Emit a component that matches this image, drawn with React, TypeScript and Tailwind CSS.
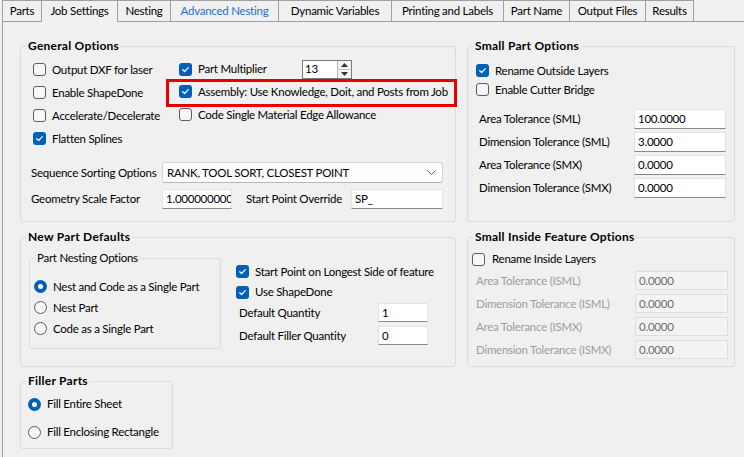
import React from "react";

const Check = ({ checked }: { checked?: boolean }) =>
  checked ? (
    <span className="w-[13px] h-[13px] rounded-[3px] bg-[#005fb8] flex items-center justify-center shrink-0">
      <svg width="9" height="9" viewBox="0 0 9 9">
        <path d="M1.7 4.7 3.6 6.5 7.3 2.6" fill="none" stroke="#fff" strokeWidth="1.2" strokeLinecap="round" strokeLinejoin="round" />
      </svg>
    </span>
  ) : (
    <span className="w-[13px] h-[13px] rounded-[3px] border border-[#5c5c5c] bg-[#f7f7f7] shrink-0" />
  );

const Radio = ({ checked }: { checked?: boolean }) =>
  checked ? (
    <span className="w-[13px] h-[13px] rounded-full bg-[#005fb8] flex items-center justify-center shrink-0">
      <span className="w-[5px] h-[5px] rounded-full bg-white" />
    </span>
  ) : (
    <span className="w-[13px] h-[13px] rounded-full border border-[#5c5c5c] bg-[#f7f7f7] shrink-0" />
  );

const Group = ({
  title,
  className,
  bold = true,
  children,
}: {
  title: string;
  className: string;
  bold?: boolean;
  children?: React.ReactNode;
}) => (
  <div className={`border border-[#dcdcdc] rounded-[3px] flex flex-col shrink-0 ${className}`}>
    <div
      className={`-mt-[9px] ml-[5px] px-[2px] w-fit bg-[#f0f0f0] leading-[16px] whitespace-nowrap ${
        bold ? "font-bold text-[12px] tracking-[0.25px]" : ""
      }`}
    >
      {title}
    </div>
    {children}
  </div>
);

const Field = ({ value, className }: { value: string; className: string }) => (
  <div className={`bg-white border border-[#e3e3e3] border-b-[#8a8a8a] pl-[3px] flex items-center overflow-hidden whitespace-nowrap shrink-0 ${className}`}>
    {value}
  </div>
);

const Disabled = ({ value }: { value: string }) => (
  <div className="w-[93px] h-[19px] bg-[#f3f3f3] border border-[#dedede] pl-[3px] flex items-center text-[#6d6d6d] shrink-0">
    {value}
  </div>
);

const Spinner = () => (
  <div className="flex h-[19px] border border-[#7a7a7a] bg-white w-[50px] shrink-0">
    <div className="flex-1 pl-[2px] flex items-center">13</div>
    <div className="w-[14px] flex flex-col border-l border-[#b5b5b5]">
      <div className="flex-1 flex items-center justify-center bg-[#f4f4f4] border-b border-[#c8c8c8]">
        <svg width="7" height="4" viewBox="0 0 7 4"><path d="M0 4 3.5 0 7 4Z" fill="#333" /></svg>
      </div>
      <div className="flex-1 flex items-center justify-center bg-[#f4f4f4]">
        <svg width="7" height="4" viewBox="0 0 7 4"><path d="M0 0 3.5 4 7 0Z" fill="#333" /></svg>
      </div>
    </div>
  </div>
);

const tabs: { label: string; w: string; selected?: boolean; hover?: boolean; last?: boolean }[] = [
  { label: "Parts", w: "w-[39px]" },
  { label: "Job Settings", w: "w-[76px]", selected: true },
  { label: "Nesting", w: "w-[53px]" },
  { label: "Advanced Nesting", w: "w-[108px]", hover: true },
  { label: "Dynamic Variables", w: "w-[113px]" },
  { label: "Printing and Labels", w: "w-[112px]" },
  { label: "Part Name", w: "w-[66px]" },
  { label: "Output Files", w: "w-[76px]" },
  { label: "Results", w: "w-[49px]", last: true },
];

export default function App() {
  return (
    <div className="w-[744px] h-[457px] overflow-hidden bg-[#f0f0f0] text-[11.5px] tracking-[-0.25px] leading-[16px] text-black font-['Lato',sans-serif]">
      {/* Tab strip */}
      <div className="h-[21px] pl-[2px] flex items-start">
        {tabs.map((t) => (
          <div
            key={t.label}
            className={`${t.w} ${t.selected ? "h-[22px] relative z-10" : "h-[21px]"} ${t.last ? "border-r" : ""} ${t.hover ? "text-[#1f6fcf]" : ""} border-l border-t border-[#a0a0a0] bg-[#f0f0f0] flex items-center justify-center whitespace-nowrap shrink-0 pb-[1px]`}
          >
            {t.label}
          </div>
        ))}
      </div>

      {/* Tab page */}
      <div className="ml-[2px] h-[436px] border-l border-t border-[#a0a0a0] flex">
        {/* Left column */}
        <div className="ml-[17px] w-[436px] flex flex-col shrink-0">
          <Group title="General Options" className="mt-[24px] h-[176px]">
            <div className="mt-[4px] flex">
              <div className="w-[158px] flex flex-col">
                {([
                  ["Output DXF for laser", false],
                  ["Enable ShapeDone", false],
                  ["Accelerate/Decelerate", false],
                  ["Flatten Splines", true],
                ] as [string, boolean][]).map(([t, c]) => (
                  <div key={t} className="h-[23px] pl-[12px] flex items-center gap-[6px] whitespace-nowrap">
                    <Check checked={c} />
                    {t}
                  </div>
                ))}
              </div>
              <div className="flex flex-col">
                <div className="h-[22px] flex items-center">
                  <div className="w-[123px] flex items-center gap-[6px] whitespace-nowrap">
                    <Check checked />
                    Part Multiplier
                  </div>
                  <Spinner />
                </div>
                <div className="relative h-[23px] flex items-center gap-[6px] whitespace-nowrap">
                  <Check checked />
                  Assembly: Use Knowledge, Doit, and Posts from Job
                  <div className="absolute left-[-13px] top-[-1px] w-[291px] h-[28px] border-[3px] border-[#e60000]" />
                </div>
                <div className="h-[23px] flex items-center gap-[6px] whitespace-nowrap">
                  <Check />
                  Code Single Material Edge Allowance
                </div>
              </div>
            </div>
            <div className="mt-[12px] h-[21px] pl-[10px] flex items-center">
              <div className="w-[131px] whitespace-nowrap">Sequence Sorting Options</div>
              <div className="w-[281px] h-[21px] bg-[#fdfdfd] border border-[#d4d4d4] border-b-[#b8b8b8] rounded-[3px] pl-[4px] pr-[6px] flex items-center justify-between">
                <span>RANK, TOOL SORT, CLOSEST POINT</span>
                <svg width="9" height="5" viewBox="0 0 9 5">
                  <path d="M0.5 0.5 4.5 4.5 8.5 0.5" fill="none" stroke="#606060" strokeWidth="1" />
                </svg>
              </div>
            </div>
            <div className="mt-[6px] h-[20px] pl-[10px] flex items-center">
              <div className="w-[131px] whitespace-nowrap">Geometry Scale Factor</div>
              <Field value="1.0000000000" className="w-[70px] h-[20px]" />
              <div className="ml-[14px] w-[105px] whitespace-nowrap">Start Point Override</div>
              <Field value="SP_" className="w-[92px] h-[20px]" />
            </div>
          </Group>

          <Group title="New Part Defaults" className="mt-[15px] h-[130px]">
            <div className="flex">
              <Group title="Part Nesting Options" bold={false} className="mt-[13px] ml-[8px] w-[192px] h-[91px]">
                <div className="mt-[10px] flex flex-col">
                  {([
                    ["Nest and Code as a Single Part", true],
                    ["Nest Part", false],
                    ["Code as a Single Part", false],
                  ] as [string, boolean][]).map(([t, c]) => (
                    <div key={t} className="h-[21px] pl-[4px] flex items-center gap-[6px] whitespace-nowrap">
                      <Radio checked={c} />
                      {t}
                    </div>
                  ))}
                </div>
              </Group>
              <div className="ml-[15px] mt-[16px] flex flex-col">
                <div className="h-[21px] flex items-center gap-[6px] whitespace-nowrap">
                  <Check checked />
                  Start Point on Longest Side of feature
                </div>
                <div className="h-[20px] flex items-center gap-[6px] whitespace-nowrap">
                  <Check checked />
                  Use ShapeDone
                </div>
                <div className="h-[21px] pl-[3px] flex items-center">
                  <div className="w-[139px] whitespace-nowrap">Default Quantity</div>
                  <Field value="1" className="w-[50px] h-[19px]" />
                </div>
                <div className="mt-[2px] h-[21px] pl-[3px] flex items-center">
                  <div className="w-[139px] whitespace-nowrap">Default Filler Quantity</div>
                  <Field value="0" className="w-[50px] h-[19px]" />
                </div>
              </div>
            </div>
          </Group>

          <Group title="Filler Parts" className="mt-[14px] w-[153px] h-[68px]">
            <div className="mt-[4px] h-[22px] pl-[7px] flex items-center gap-[6px] whitespace-nowrap">
              <Radio checked />
              Fill Entire Sheet
            </div>
            <div className="mt-[6px] h-[22px] pl-[7px] flex items-center gap-[6px] whitespace-nowrap">
              <Radio />
              Fill Enclosing Rectangle
            </div>
          </Group>
        </div>

        {/* Right column */}
        <div className="ml-[11px] w-[268px] flex flex-col shrink-0">
          <Group title="Small Part Options" className="mt-[24px] h-[176px]">
            <div className="mt-[7px] flex flex-col">
              <div className="h-[19px] pl-[8px] flex items-center gap-[6px] whitespace-nowrap">
                <Check checked />
                Rename Outside Layers
              </div>
              <div className="h-[19px] pl-[8px] flex items-center gap-[6px] whitespace-nowrap">
                <Check />
                Enable Cutter Bridge
              </div>
            </div>
            <div className="mt-[8px] flex flex-col">
              {[
                ["Area Tolerance (SML)", "100.0000"],
                ["Dimension Tolerance (SML)", "3.0000"],
                ["Area Tolerance (SMX)", "0.0000"],
                ["Dimension Tolerance (SMX)", "0.0000"],
              ].map(([l, v]) => (
                <div key={l} className="h-[23px] pl-[11px] flex items-center">
                  <div className="w-[155px] whitespace-nowrap">{l}</div>
                  <Field value={v} className="w-[92px] h-[20px]" />
                </div>
              ))}
            </div>
          </Group>

          <Group title="Small Inside Feature Options" className="mt-[15px] h-[130px]">
            <div className="mt-[4px] h-[20px] pl-[4px] flex items-center gap-[7px] whitespace-nowrap">
              <Check />
              Rename Inside Layers
            </div>
            <div className="flex flex-col">
              {[
                "Area Tolerance (ISML)",
                "Dimension Tolerance (ISML)",
                "Area Tolerance (ISMX)",
                "Dimension Tolerance (ISMX)",
              ].map((l) => (
                <div key={l} className="h-[23px] pl-[8px] flex items-center">
                  <div className="w-[159px] whitespace-nowrap text-[#9d9d9d]">{l}</div>
                  <Disabled value="0.0000" />
                </div>
              ))}
            </div>
          </Group>
        </div>
      </div>
    </div>
  );
}
